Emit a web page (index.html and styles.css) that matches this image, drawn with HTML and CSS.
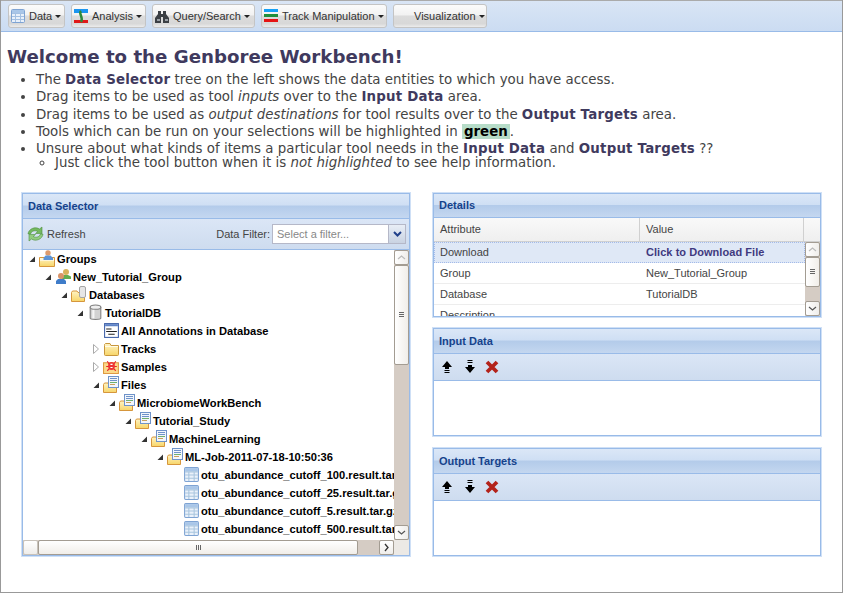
FILE: index.html
```html
<!DOCTYPE html>
<html lang="en">
<head>
<meta charset="utf-8">
<title>Genboree Workbench</title>
<link rel="stylesheet" href="styles.css">
</head>
<body>
<svg class="defs" width="0" height="0" aria-hidden="true">
  <defs>
    <linearGradient id="fy" x1="0" y1="0" x2="0" y2="1"><stop offset="0" stop-color="#fff4c4"/><stop offset="1" stop-color="#f7d568"/></linearGradient>
    <symbol id="folder" viewBox="0 0 17 17">
      <path d="M1.500 5.500V14.500Q1.500 15.500 2.500 15.500H14.500Q15.500 15.500 15.500 14.500V5.500H8L7 3.500H2.500L1.500 4.500Z" fill="url(#fy)" stroke="#c8963c"/>
      <rect x="2" y="6" width="13" height="1" fill="#fffbe8"/>
    </symbol>
    <symbol id="person-folder" viewBox="0 0 17 17">
      <path d="M0.500 7.500V16.500H15.500V7.500Z" fill="url(#fy)" stroke="#d6963c"/>
      <rect x="1" y="8" width="14" height="3" fill="#fdf6d8"/>
      <circle cx="9" cy="3" r="2.700" fill="#dc9a6c"/>
      <path d="M4.500 10V8L6.500 5.500H11.500L14 8V10Z" fill="#5b93d6"/>
    </symbol>
    <symbol id="people" viewBox="0 0 17 17">
      <circle cx="11" cy="4" r="3" fill="#d8b35a"/>
      <path d="M7 11V8.500L9 7H13L16 8.500V11Z" fill="#62ae4f"/>
      <circle cx="6" cy="8" r="3" fill="#d99468"/>
      <path d="M1 16V13L3 11H9L11 13V16Z" fill="#3f7cc9"/>
    </symbol>
    <symbol id="db-folder" viewBox="0 0 17 17">
      <path d="M0.500 6.500V15.500H13.500V6.500H7L6 5H1.500Z" fill="url(#fy)" stroke="#d6963c"/>
      <rect x="8.500" y="0.500" width="6" height="11" rx="1.500" fill="#e6e6e6" stroke="#a5a5a5"/>
    </symbol>
    <symbol id="db" viewBox="0 0 16 16">
      <path d="M3 3V13.500C3 15 13 15 13 13.500V3Z" fill="#d2d2d2" stroke="#808080"/>
      <ellipse cx="8" cy="3" rx="5" ry="2" fill="#efefef" stroke="#808080"/>
      <rect x="5" y="5.500" width="2" height="8" fill="#f5f5f5"/>
    </symbol>
    <symbol id="annot" viewBox="0 0 16 16">
      <rect x="1.500" y="1.500" width="13" height="13" fill="#fff" stroke="#3f61a8"/>
      <rect x="2" y="2" width="12" height="2" fill="#5d82c6"/>
      <path d="M3 6.500H8M3 9H13M5 11.500H11" stroke="#222" stroke-width="1"/>
    </symbol>
    <symbol id="bug-folder" viewBox="0 0 16 16">
      <path d="M0.500 4.500V14.500H14.500V4.500Z" fill="#fbd98a" stroke="#e09a41"/>
      <path d="M4 3L6 6H10L12 3M3 8H13M4 12L6 10H10L12 12" stroke="#e8212c" fill="none"/>
      <ellipse cx="8" cy="7.500" rx="3.200" ry="3.800" fill="#ee3535"/>
      <path d="M7 6H9M7 9H9" stroke="#fff"/>
    </symbol>
    <symbol id="file-folder" viewBox="0 0 17 17">
      <path d="M0.500 8.500V16.500H13.500V8.500H6L5 7H1.500Z" fill="url(#fy)" stroke="#d6963c"/>
      <rect x="5.500" y="0.500" width="10" height="11" fill="#f2f6fc" stroke="#6f93c9"/>
      <path d="M7 2.500H14M7 4.500H14" stroke="#6f93c9"/>
      <path d="M7 6.500H14" stroke="#6fb06f"/>
      <path d="M7 8.500H12" stroke="#c9a05c"/>
    </symbol>
    <symbol id="grid" viewBox="0 0 16 16">
      <rect x="1.500" y="1.500" width="13" height="13" rx="1" fill="#e8f0fa" stroke="#7ea3d3"/>
      <rect x="2" y="2" width="12" height="3" fill="#a9c6e8"/>
      <path d="M2 5.500H14M2 8.500H14M2 11.500H14M5.500 5V14M10.500 5V14" stroke="#a4c0e2" fill="none"/>
    </symbol>
    <symbol id="grid-green" viewBox="0 0 16 16">
      <rect x="1.500" y="1.500" width="13" height="13" rx="1" fill="#eaf1fa" stroke="#7ea3d3"/>
      <rect x="2" y="2" width="12" height="3" fill="#a9c6e8"/>
      <path d="M2 5.500H14M2 8.500H14M2 11.500H14M5.500 5V14M10.500 5V14" stroke="#a9c6de" fill="none"/>
    </symbol>
    <symbol id="up" viewBox="0 0 12 14">
      <path d="M6 1L11 7H8V9H4V7H1Z" fill="#000"/>
      <path d="M3.500 10.500H8.500M3.500 12.500H8.500" stroke="#000"/>
    </symbol>
    <symbol id="down" viewBox="0 0 12 14">
      <path d="M3.500 1.500H8.500M3.500 3.500H8.500" stroke="#000" transform="translate(0 -1)"/>
      <path d="M6 13L11 7H8V5H4V7H1Z" fill="#000"/>
    </symbol>
    <symbol id="del" viewBox="0 0 14 14">
      <path d="M2 2L12 12M12 2L2 12" stroke="#b3231b" stroke-width="3.800"/>
    </symbol>
    <symbol id="chev-up" viewBox="0 0 9 5"><path d="M1 4L4.500 1L8 4" fill="none" stroke="#bbb" stroke-width="1.200"/></symbol>
    <symbol id="chev-down" viewBox="0 0 9 5"><path d="M1 1L4.500 4L8 1" fill="none" stroke="#555" stroke-width="1.200"/></symbol>
    <symbol id="chev-right" viewBox="0 0 5 9"><path d="M1 1L4 4.500L1 8" fill="none" stroke="#333" stroke-width="1.300"/></symbol>
    <symbol id="open" viewBox="0 0 8 8"><path d="M7 1.500V7H1.500Z" fill="#333"/></symbol>
    <symbol id="closed" viewBox="0 0 8 10"><path d="M1.500 0.500L6.500 5L1.500 9.500Z" fill="#fff" stroke="#aaa"/></symbol>
  </defs>
</svg>
<div class="app">
  <nav class="topbar">
    <button class="tbtn tbtn-data" type="button">
      <svg class="tico" width="16" height="16"><use href="#grid"/></svg>Data<i class="caret"></i>
    </button>
    <button class="tbtn tbtn-analysis" type="button">
      <svg class="tico" width="15" height="15" viewBox="0 0 15 15">
        <rect width="14" height="4" fill="#1b95f0"/><rect y="11" width="14" height="3" fill="#e01818"/>
        <path d="M7 2C4 5 10 8 7 13" stroke="#2f8a3a" stroke-width="2.500" fill="none"/>
      </svg>Analysis<i class="caret"></i>
    </button>
    <button class="tbtn tbtn-query" type="button">
      <svg class="tico tico-query" width="16" height="15" viewBox="0 0 16 15">
        <path d="M3 2H6V5H8V2H11V5L14 9V14H8V8H6V14H0V9L3 5Z" fill="#3b3f44"/>
        <rect x="2" y="10" width="3" height="2" fill="#9aa0a6"/><rect x="10" y="10" width="3" height="2" fill="#9aa0a6"/>
      </svg>Query/Search<i class="caret"></i>
    </button>
    <button class="tbtn tbtn-track" type="button">
      <svg class="tico" width="15" height="14" viewBox="0 0 15 14">
        <rect y="0" width="14" height="3" fill="#16a0f5"/><rect y="5" width="14" height="3" fill="#1f8f3c"/><rect y="10" width="14" height="3" fill="#e51414"/>
      </svg>Track Manipulation<i class="caret"></i>
    </button>
    <button class="tbtn tbtn-vis" type="button">
      <span class="tico-blank"></span>Visualization<i class="caret"></i>
    </button>
  </nav>

  <main class="content">
    <h1 class="welcome">Welcome to the Genboree Workbench!</h1>
    <ul class="intro">
      <li>The <b>Data Selector</b> tree on the left shows the data entities to which you have access.</li>
      <li>Drag items to be used as tool <em>inputs</em> over to the <b>Input Data</b> area.</li>
      <li>Drag items to be used as <em>output destinations</em> for tool results over to the <b>Output Targets</b> area.</li>
      <li>Tools which can be run on your selections will be highlighted in <b class="green">green</b>.</li>
      <li>Unsure about what kinds of items a particular tool needs in the <b>Input Data</b> and <b>Output Targets</b> ??
        <ul class="sub"><li>Just click the tool button when it is <em>not highlighted</em> to see help information.</li></ul>
      </li>
    </ul>

    <div class="columns">
      <section class="panel panel-selector">
        <header class="phead">Data Selector</header>
        <div class="ptools ptools-selector">
          <span class="refresh">
            <svg width="17" height="16" viewBox="0 0 17 16">
              <path d="M1 8C1.500 3 8 0 12.500 3L15 1V7.500H8.500L10.800 5.500C8 4 4.500 5 3.500 8Z" fill="#74b860" stroke="#4d8f3e" stroke-width=".6"/>
              <path d="M16 8C15.500 13 9 16 4.500 13L2 15V8.500H8.500L6.200 10.500C9 12 12.500 11 13.500 8Z" fill="#92cc80" stroke="#4d8f3e" stroke-width=".6"/>
            </svg>
            Refresh
          </span>
          <span class="filter-label">Data Filter:</span>
          <span class="combo"><span class="combo-text">Select a filter...</span><span class="combo-btn"><svg width="9" height="6" viewBox="0 0 9 6"><path d="M1 1L4.500 4.500L8 1" fill="none" stroke="#21408a" stroke-width="2"/></svg></span></span>
        </div>
        <div class="tree-wrap">
          <ul class="tree">
            <li class="node lv0"><svg class="tw" width="8" height="8"><use href="#open"/></svg><svg class="ni" width="17" height="17"><use href="#person-folder"/></svg>Groups</li>
            <li class="node lv1"><svg class="tw" width="8" height="8"><use href="#open"/></svg><svg class="ni" width="17" height="17"><use href="#people"/></svg>New_Tutorial_Group</li>
            <li class="node lv2"><svg class="tw" width="8" height="8"><use href="#open"/></svg><svg class="ni" width="17" height="17"><use href="#db-folder"/></svg>Databases</li>
            <li class="node lv3"><svg class="tw" width="8" height="8"><use href="#open"/></svg><svg class="ni" width="17" height="17"><use href="#db"/></svg>TutorialDB</li>
            <li class="node lv4"><span class="tw tw-none"></span><svg class="ni" width="17" height="17"><use href="#annot"/></svg>All Annotations in Database</li>
            <li class="node lv4"><svg class="tw" width="8" height="10"><use href="#closed"/></svg><svg class="ni" width="17" height="17"><use href="#folder"/></svg>Tracks</li>
            <li class="node lv4"><svg class="tw" width="8" height="10"><use href="#closed"/></svg><svg class="ni" width="17" height="17"><use href="#bug-folder"/></svg>Samples</li>
            <li class="node lv4"><svg class="tw" width="8" height="8"><use href="#open"/></svg><svg class="ni" width="17" height="17"><use href="#file-folder"/></svg>Files</li>
            <li class="node lv5"><svg class="tw" width="8" height="8"><use href="#open"/></svg><svg class="ni" width="17" height="17"><use href="#file-folder"/></svg>MicrobiomeWorkBench</li>
            <li class="node lv6"><svg class="tw" width="8" height="8"><use href="#open"/></svg><svg class="ni" width="17" height="17"><use href="#file-folder"/></svg>Tutorial_Study</li>
            <li class="node lv7"><svg class="tw" width="8" height="8"><use href="#open"/></svg><svg class="ni" width="17" height="17"><use href="#file-folder"/></svg>MachineLearning</li>
            <li class="node lv8"><svg class="tw" width="8" height="8"><use href="#open"/></svg><svg class="ni" width="17" height="17"><use href="#file-folder"/></svg>ML-Job-2011-07-18-10:50:36</li>
            <li class="node lv9"><span class="tw tw-none"></span><svg class="ni" width="17" height="17"><use href="#grid-green"/></svg>otu_abundance_cutoff_100.result.tar.gz</li>
            <li class="node lv9"><span class="tw tw-none"></span><svg class="ni" width="17" height="17"><use href="#grid-green"/></svg>otu_abundance_cutoff_25.result.tar.gz</li>
            <li class="node lv9"><span class="tw tw-none"></span><svg class="ni" width="17" height="17"><use href="#grid-green"/></svg>otu_abundance_cutoff_5.result.tar.gz</li>
            <li class="node lv9"><span class="tw tw-none"></span><svg class="ni" width="17" height="17"><use href="#grid-green"/></svg>otu_abundance_cutoff_500.result.tar.gz</li>
          </ul>
          <div class="sb-v sb-v-tree">
            <span class="sb-btn sb-btn-up"><svg width="9" height="5"><use href="#chev-up"/></svg></span>
            <span class="sb-thumb sb-thumb-tree"><i class="grip"></i></span>
            <span class="sb-fill"></span>
            <span class="sb-btn sb-btn-down"><svg width="9" height="5"><use href="#chev-down"/></svg></span>
          </div>
          <div class="sb-h">
            <span class="sb-hbtn"></span>
            <span class="sb-hthumb"><i class="grip-h"></i></span>
            <span class="sb-hfill"></span>
            <span class="sb-hbtn sb-hbtn-right"><svg width="5" height="9"><use href="#chev-right"/></svg></span>
            <span class="sb-corner"></span>
          </div>
        </div>
      </section>

      <div class="right">
        <section class="panel panel-details">
          <header class="phead phead-details">Details</header>
          <div class="grid-head">
            <span class="gh gh-a">Attribute</span><span class="gh gh-b">Value</span><span class="gh gh-c"></span>
          </div>
          <div class="grid-body">
            <div class="rows">
              <div class="row row-sel"><span class="cell-a">Download</span><span class="cell-b cell-link">Click to Download File</span></div>
              <div class="row"><span class="cell-a">Group</span><span class="cell-b">New_Tutorial_Group</span></div>
              <div class="row"><span class="cell-a">Database</span><span class="cell-b">TutorialDB</span></div>
              <div class="row"><span class="cell-a">Description</span><span class="cell-b"></span></div>
            </div>
            <div class="sb-v sb-v-grid">
              <span class="sb-btn sb-btn-up"><svg width="9" height="5"><use href="#chev-up"/></svg></span>
              <span class="sb-thumb sb-thumb-grid"><i class="grip"></i></span>
              <span class="sb-fill"></span>
              <span class="sb-btn sb-btn-down"><svg width="9" height="5"><use href="#chev-down"/></svg></span>
            </div>
          </div>
        </section>

        <section class="panel panel-drop">
          <header class="phead">Input Data</header>
          <div class="ptools">
            <svg class="act" width="12" height="14"><use href="#up"/></svg>
            <svg class="act" width="12" height="14"><use href="#down"/></svg>
            <svg class="act act-del" width="14" height="14"><use href="#del"/></svg>
          </div>
          <div class="drop-body"></div>
        </section>

        <section class="panel panel-drop">
          <header class="phead">Output Targets</header>
          <div class="ptools">
            <svg class="act" width="12" height="14"><use href="#up"/></svg>
            <svg class="act" width="12" height="14"><use href="#down"/></svg>
            <svg class="act act-del" width="14" height="14"><use href="#del"/></svg>
          </div>
          <div class="drop-body"></div>
        </section>
      </div>
    </div>
  </main>
</div>
</body>
</html>
```

FILE: styles.css
```css
* { box-sizing: border-box; }
html, body { margin: 0; padding: 0; background: #fff; }
body { width: 843px; height: 593px; overflow: hidden; }
.defs { position: absolute; }
.app {
  width: 843px; height: 593px;
  border: 1px solid #999; border-top: 0;
  display: flex; flex-direction: column;
  overflow: hidden;
}
.topbar {
  height: 32px; flex: none;
  display: flex; gap: 6px; align-items: flex-start;
  padding: 3px 0 0 7px;
  background: linear-gradient(#d9e5f5, #cbdcf2);
  border-top: 1px solid #aaa;
  border-bottom: 1px solid #99bbe8;
}
.tbtn {
  height: 24px; padding: 0 0 0 2px; margin: 0;
  display: flex; align-items: center;
  font: 11px/1 "Liberation Sans", sans-serif;
  color: #333;
  border: 1px solid #c4c4c4; border-radius: 3px;
  background: linear-gradient(#fbfbfb 0, #f2f2f2 45%, #dcdcdc 50%, #d8d8d8 85%, #ececec 100%);
  white-space: nowrap;
}
.tbtn-data { width: 57px; padding-left: 1px; }
.tbtn-analysis { width: 75px; }
.tbtn-query { width: 103px; }
.tbtn-track { width: 126px; }
.tbtn-vis { width: 94px; }
.tico { margin-right: 3px; flex: none; }
.tico-query { margin-right: 2px; }
.tico-blank { width: 18px; flex: none; }
.caret {
  width: 0; height: 0; margin-left: 3px;
  border: 3px solid transparent; border-top-color: #222; border-bottom: 0;
}
.content { flex: 1; min-height: 0; padding: 12px 0 0 6px; }
.welcome {
  margin: 0; font: bold 18.2px/25px "DejaVu Sans", sans-serif; color: #3f3a5e;
}
.intro {
  margin: 2px 0 0; padding: 0 0 0 29px;
  font: 13.37px/17.3px "DejaVu Sans", sans-serif; color: #444;
}
.intro b { font-weight: bold; color: #3f3a5e; letter-spacing: .2px; }
.intro .green { color: #000; background: #b6dcc8; padding: 0 2px; letter-spacing: 0; }
.sub { margin: -3px 0 0; padding: 0 0 0 19px; list-style: circle; }
.columns {
  display: flex; align-items: flex-start; gap: 23px;
  margin: 21px 0 0 15px;
}
.panel {
  border: 1px solid #99bbe8; outline: 1px solid #cfe0f6; outline-offset: 0;
  width: 388px; display: flex; flex-direction: column; background: #fff;
}
.panel-selector { height: 363px; }
.right { display: flex; flex-direction: column; gap: 11px; }
.panel-details { height: 124px; }
.panel-drop { height: 108px; }
.panel-drop + .panel-drop { margin-top: 1px; }
.phead {
  height: 25px; flex: none; padding: 5px 5px 0;
  font: bold 11px/14px "Liberation Sans", sans-serif; color: #15428b;
  background: linear-gradient(#dbe7f7 0, #cfdff4 46%, #b3cbea 50%, #c4d7f0 100%);
  border-bottom: 1px solid #99bbe8;
}
.phead-details { height: 24px; padding-top: 4px; }
.ptools {
  height: 27px; flex: none;
  display: flex; align-items: center; padding-left: 7px;
  background: linear-gradient(#dbe6f6, #cedcef);
  border-bottom: 1px solid #99bbe8;
}
.act { margin-right: 11px; flex: none; }
.act-del { margin-left: -2px; }
.ptools-selector {
  height: 31px; padding: 1px 3px 0 4px;
  font: 11px/14px "Liberation Sans", sans-serif; color: #444;
}
.refresh { display: flex; align-items: center; gap: 3px; }
.filter-label { margin-left: auto; margin-right: 2px; }
.combo {
  width: 134px; height: 20px; display: flex;
  background: #fff; border: 1px solid #b5b8c8;
}
.combo-text { flex: 1; padding: 2px 4px; color: #888; line-height: 15px; }
.combo-btn {
  width: 17px; display: flex; align-items: center; justify-content: center;
  background: linear-gradient(#e8eef6, #c9d3e2); border-left: 1px solid #b5b8c8;
}
.tree-wrap { position: relative; flex: 1; min-height: 0; overflow: hidden; }
.tree {
  list-style: none; margin: 0; padding: 0;
  height: 290px; width: 371px; overflow: hidden;
  font: bold 11.15px/18px "Liberation Sans", sans-serif; color: #000;
}
.node { height: 18px; display: flex; align-items: center; white-space: nowrap; }
.tw { flex: none; margin-right: 3px; }
.tw-none { width: 8px; }
.ni { flex: none; margin-right: 1px; }
.lv0 { padding-left: 5px; }
.lv1 { padding-left: 21px; }
.lv2 { padding-left: 37px; }
.lv3 { padding-left: 53px; }
.lv4 { padding-left: 69px; }
.lv5 { padding-left: 85px; }
.lv6 { padding-left: 101px; }
.lv7 { padding-left: 117px; }
.lv8 { padding-left: 133px; }
.lv9 { padding-left: 149px; }
.sb-v {
  position: absolute; display: flex; flex-direction: column;
  background: #d5ccc4;
}
.sb-v-tree { right: 0; top: 0; width: 15px; height: 290px; }
.sb-btn {
  height: 15px; flex: none; display: flex; align-items: center; justify-content: center;
  background: linear-gradient(90deg, #fff, #efedea); border: 1px solid #a39c92; border-radius: 2px;
}
.sb-thumb {
  flex: none; display: flex; align-items: center; justify-content: center;
  background: linear-gradient(90deg, #fff, #f1eee9); border: 1px solid #a39c92; border-radius: 2px;
}
.sb-thumb-tree { height: 100px; }
.sb-thumb-grid { height: 30px; }
.sb-fill { flex: 1; }
.grip { width: 5px; height: 5px; border-top: 1px solid #666; border-bottom: 1px solid #666; position: relative; }
.grip::after { content: ""; position: absolute; left: 0; right: 0; top: 1px; height: 1px; background: #666; }
.sb-h {
  position: absolute; left: 0; right: 0; bottom: 0; height: 15px;
  display: flex; background: #d5ccc4;
}
.sb-hbtn {
  width: 15px; flex: none; display: flex; align-items: center; justify-content: center;
  background: linear-gradient(#fff, #efedea); border: 1px solid #c8c2ba; border-radius: 2px;
}
.sb-hbtn-right { border-color: #a39c92; }
.sb-hthumb {
  width: 320px; flex: none; display: flex; align-items: center; justify-content: center;
  background: linear-gradient(#fff, #f1eee9); border: 1px solid #a39c92; border-radius: 2px;
}
.sb-hfill { flex: 1; }
.sb-corner { width: 15px; flex: none; background: #ece9e5; }
.grip-h { width: 5px; height: 5px; border-left: 1px solid #666; border-right: 1px solid #666; position: relative; }
.grip-h::after { content: ""; position: absolute; top: 0; bottom: 0; left: 1px; width: 1px; background: #666; }
.grid-head {
  height: 24px; flex: none; display: flex;
  font: 11px/23px "Liberation Sans", sans-serif; color: #444;
  background: linear-gradient(#f9f9f9, #efefef);
  border-bottom: 1px solid #d0d0d0;
}
.gh { padding-left: 6px; border-right: 1px solid #d0d0d0; }
.gh-a { width: 206px; }
.gh-b { width: 164px; }
.gh-c { flex: 1; border-right: 0; }
.grid-body { position: relative; flex: 1; min-height: 0; overflow: hidden; }
.rows { width: 371px; }
.row {
  height: 21px; display: flex; align-items: center;
  font: 11px/14px "Liberation Sans", sans-serif; color: #444;
  border-bottom: 1px solid #ededed;
}
.row-sel { background: #dfe8f6; border: 1px dotted #a3bae9; }
.cell-a { width: 206px; padding-left: 6px; flex: none; }
.row-sel .cell-a { width: 205px; padding-left: 5px; }
.cell-b { padding-left: 6px; }
.cell-link { font-weight: bold; color: #3f3a80; letter-spacing: .05px; }
.sb-v-grid { right: 0; top: 0; width: 15px; height: 74px; }
.drop-body { flex: 1; }
```
